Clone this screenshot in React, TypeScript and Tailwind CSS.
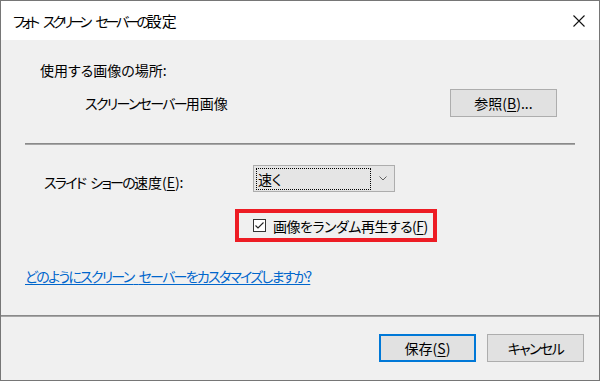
import React from "react";

const font = {
  fontFamily: '"Noto Sans CJK JP", "Noto Sans", sans-serif',
};

function U({ c }: { c: string }) {
  return <span className="underline underline-offset-2">{c}</span>;
}

export default function App() {
  return (
    <div
      className='w-[600px] h-[381px] flex flex-col bg-[#f0f0f0] border border-[#767676] overflow-hidden text-[14px] leading-[20px] text-black whitespace-pre [font-feature-settings:"palt"]'
      style={font}
    >
      {/* title bar */}
      <div className="h-[39px] bg-white flex items-center pl-[12px] pr-[14px] shrink-0">
        <span className="text-[14px] text-black">
          <span className="tracking-[-3.2px]">フォト</span>
          <span className="tracking-[3px]"> </span>
          <span className="tracking-[-3.2px]">スクリーン</span>
          <span className="tracking-[3px]"> </span>
          <span className="tracking-[-3.2px]">セーバーの</span>
          <span className="text-[15px]">設定</span>
        </span>
        <div className="ml-auto w-[12px] h-[12px]">
          <svg width="12" height="12" viewBox="0 0 12 12">
            <path d="M0.5 0.5 L11.5 11.5 M11.5 0.5 L0.5 11.5" stroke="#111" strokeWidth="1.1" fill="none" />
          </svg>
        </div>
      </div>

      {/* content */}
      <div className="flex flex-col">
        <div className="mt-[20px] pl-[39px]">使用する画像の場所:</div>

        <div className="mt-[9px] h-[28px] flex items-center">
          <div className="w-[449px] pl-[84px]">
            <span className="tracking-[-1.7px]">スクリーンセーバー</span>用画像
          </div>
          <button className="w-[107px] h-[28px] border border-[#adadad] bg-[#e1e1e1] flex items-center justify-center">
            参照(<U c="B" />)...
          </button>
        </div>

        <div className="mt-[26px] ml-[24px] w-[550px] h-[2px] border-t border-[#8a8a8a] bg-[#a6a6a6]" />

        <div className="mt-[20px] h-[27px] flex items-center">
          <div className="w-[252px] pl-[43px] pt-[6px]">
            <span className="tracking-[-1.75px]">スライド</span>
            <span className="tracking-[2px]"> </span>
            <span className="tracking-[-1.75px]">ショーの</span>速度(<U c="E" />):
          </div>
          <div className="w-[142px] h-[27px] border border-[#adadad] bg-[#e5e5e5] flex items-center pl-[2px] pr-[7px]">
            <div className="w-[115px] h-[22px] border border-dotted border-black flex items-center pl-[1px]">
              速く
            </div>
            <div className="ml-auto">
              <svg width="8" height="5" viewBox="0 0 8 5">
                <path d="M0.5 0.5 L4 4 L7.5 0.5" stroke="#606060" strokeWidth="1" fill="none" />
              </svg>
            </div>
          </div>
        </div>

        <div className="mt-[17px] pl-[234px]">
          <div className="w-[202px] h-[33px] border-[4px] border-[#ed1c24] flex items-center pl-[14px]">
            <div className="w-[13px] h-[13px] shrink-0 border border-[#333] bg-white flex items-center justify-center">
              <svg width="11" height="11" viewBox="0 0 11 11">
                <path d="M1.5 5.5 L4 8 L9.5 2.5" stroke="#222" strokeWidth="1.1" fill="none" />
              </svg>
            </div>
            <span className="ml-[7px] tracking-[-0.5px]">
              画像をランダム再生する(<U c="F" />)
            </span>
          </div>
        </div>

        <div className="mt-[24px] pl-[24px]">
          <span className="text-[#0066cc] underline underline-offset-2">
            <span className="tracking-[-1.75px]">どのようにスクリーン</span>
            <span className="tracking-[2px]"> </span>
            <span className="tracking-[-1.75px]">セーバーをカスタマイズしますか?</span>
          </span>
        </div>

        <div className="mt-[29px] w-full h-[2px] border-t border-[#8a8a8a] bg-[#a6a6a6]" />

        <div className="mt-[17px] flex justify-end gap-[11px] pr-[15px]">
          <button className="w-[97px] h-[28px] border-2 border-[#0078d7] bg-[#e1e1e1] flex items-center justify-center">
            保存(<U c="S" />)
          </button>
          <button className="w-[97px] h-[28px] border border-[#adadad] bg-[#e1e1e1] flex items-center justify-center">
            <span className="tracking-[-1.6px]">キャンセル</span>
          </button>
        </div>
      </div>
    </div>
  );
}
